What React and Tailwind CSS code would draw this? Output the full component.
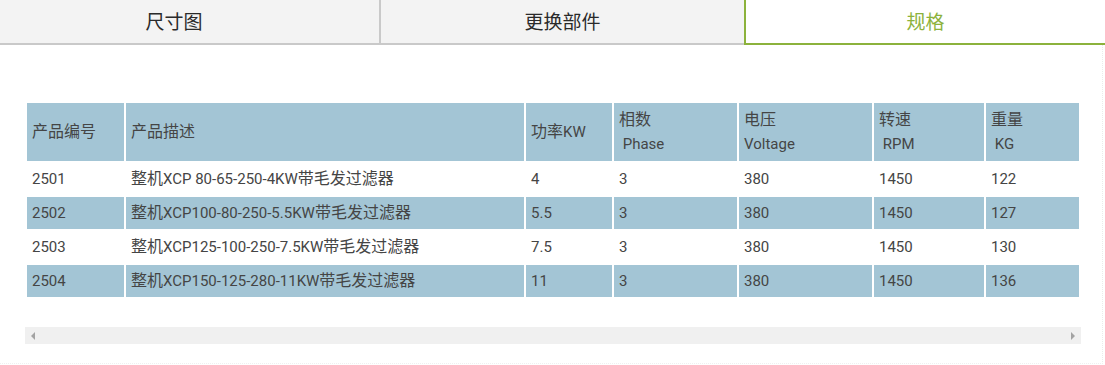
import React from "react";

const headers = [
  { a: "产品编号" },
  { a: "产品描述" },
  { a: "功率KW" },
  { a: "相数", b: " Phase" },
  { a: "电压", b: "Voltage" },
  { a: "转速", b: " RPM" },
  { a: "重量", b: " KG" },
];

const rows = [
  ["2501", "整机XCP 80-65-250-4KW带毛发过滤器", "4", "3", "380", "1450", "122"],
  ["2502", "整机XCP100-80-250-5.5KW带毛发过滤器", "5.5", "3", "380", "1450", "127"],
  ["2503", "整机XCP125-100-250-7.5KW带毛发过滤器", "7.5", "3", "380", "1450", "130"],
  ["2504", "整机XCP150-125-280-11KW带毛发过滤器", "11", "3", "380", "1450", "136"],
];

const font = { fontFamily: 'Roboto, "Noto Sans CJK SC", sans-serif' };

function Mixed({ text }) {
  const parts = text.split(/([\u4e00-\u9fff]+)/).filter((p) => p !== "");
  return (
    <>
      {parts.map((p, i) =>
        /[\u4e00-\u9fff]/.test(p) ? (
          <span key={i} className="text-[16px]">
            {p}
          </span>
        ) : (
          <span key={i}>{p}</span>
        )
      )}
    </>
  );
}

export default function App() {
  return (
    <div className="w-[1105px] h-[365px] bg-white overflow-hidden relative" style={font}>
      {/* Tabs */}
      <div className="flex h-[45px] font-['Noto_Sans_CJK_SC',sans-serif]">
        <div className="w-[379px] h-[45px] bg-[#f3f3f3] border-b-2 border-[#c9c9c9] flex items-center justify-center pr-[31px] text-[19px] text-[#2a2a2a]">
          尺寸图
        </div>
        <div className="w-[365px] h-[45px] bg-[#f3f3f3] border-l-2 border-b-2 border-[#c9c9c9] flex items-center justify-center text-[19px] text-[#2a2a2a]">
          更换部件
        </div>
        <div className="flex-1 h-[45px] bg-white border-l-2 border-b-2 border-[#8cb23c] flex items-center justify-center text-[19px] text-[#8cb23c]">
          规格
        </div>
      </div>

      {/* Table */}
      <div className="ml-[25px] mt-[56px] w-[1056px]">
        <table className="table-fixed border-separate border-spacing-[2px] w-[1056px] text-[15px] text-[#454545]">
          <colgroup>
            <col className="w-[97px]" />
            <col className="w-[398px]" />
            <col className="w-[86px]" />
            <col className="w-[123px]" />
            <col className="w-[133px]" />
            <col className="w-[110px]" />
            <col className="w-[93px]" />
          </colgroup>
          <thead>
            <tr>
              {headers.map((h, i) => (
                <th
                  key={i}
                  className="h-[58px] bg-[#a3c5d5] text-left font-normal align-middle px-[5px] leading-[24px]"
                >
                  <div className="whitespace-pre">
                    <Mixed text={h.a} />
                  </div>
                  {h.b && <div className="whitespace-pre">{h.b}</div>}
                </th>
              ))}
            </tr>
          </thead>
          <tbody>
            {rows.map((r, ri) => (
              <tr key={ri}>
                {r.map((c, ci) => (
                  <td
                    key={ci}
                    className={`h-[32px] px-[5px] align-middle whitespace-nowrap ${
                      ri % 2 === 1 ? "bg-[#a3c5d5]" : "bg-white"
                    }`}
                  >
                    <Mixed text={c} />
                  </td>
                ))}
              </tr>
            ))}
          </tbody>
        </table>

        {/* Scrollbar */}
        <div className="mt-[28px] h-[17px] bg-[#f0f0f0] flex items-center justify-between px-[5px]">
          <svg width="6" height="8" viewBox="0 0 6 8">
            <path d="M5 0 L1 4 L5 8 Z" fill="#a3a3a3" />
          </svg>
          <svg width="6" height="8" viewBox="0 0 6 8">
            <path d="M1 0 L5 4 L1 8 Z" fill="#a3a3a3" />
          </svg>
        </div>
      </div>

      <div className="absolute right-[2px] top-[45px] bottom-[1px] border-r border-dotted border-[#ebebeb]" />
      <div className="absolute left-0 right-[2px] bottom-[1px] border-b border-dotted border-[#f0f0f0]" />
    </div>
  );
}
